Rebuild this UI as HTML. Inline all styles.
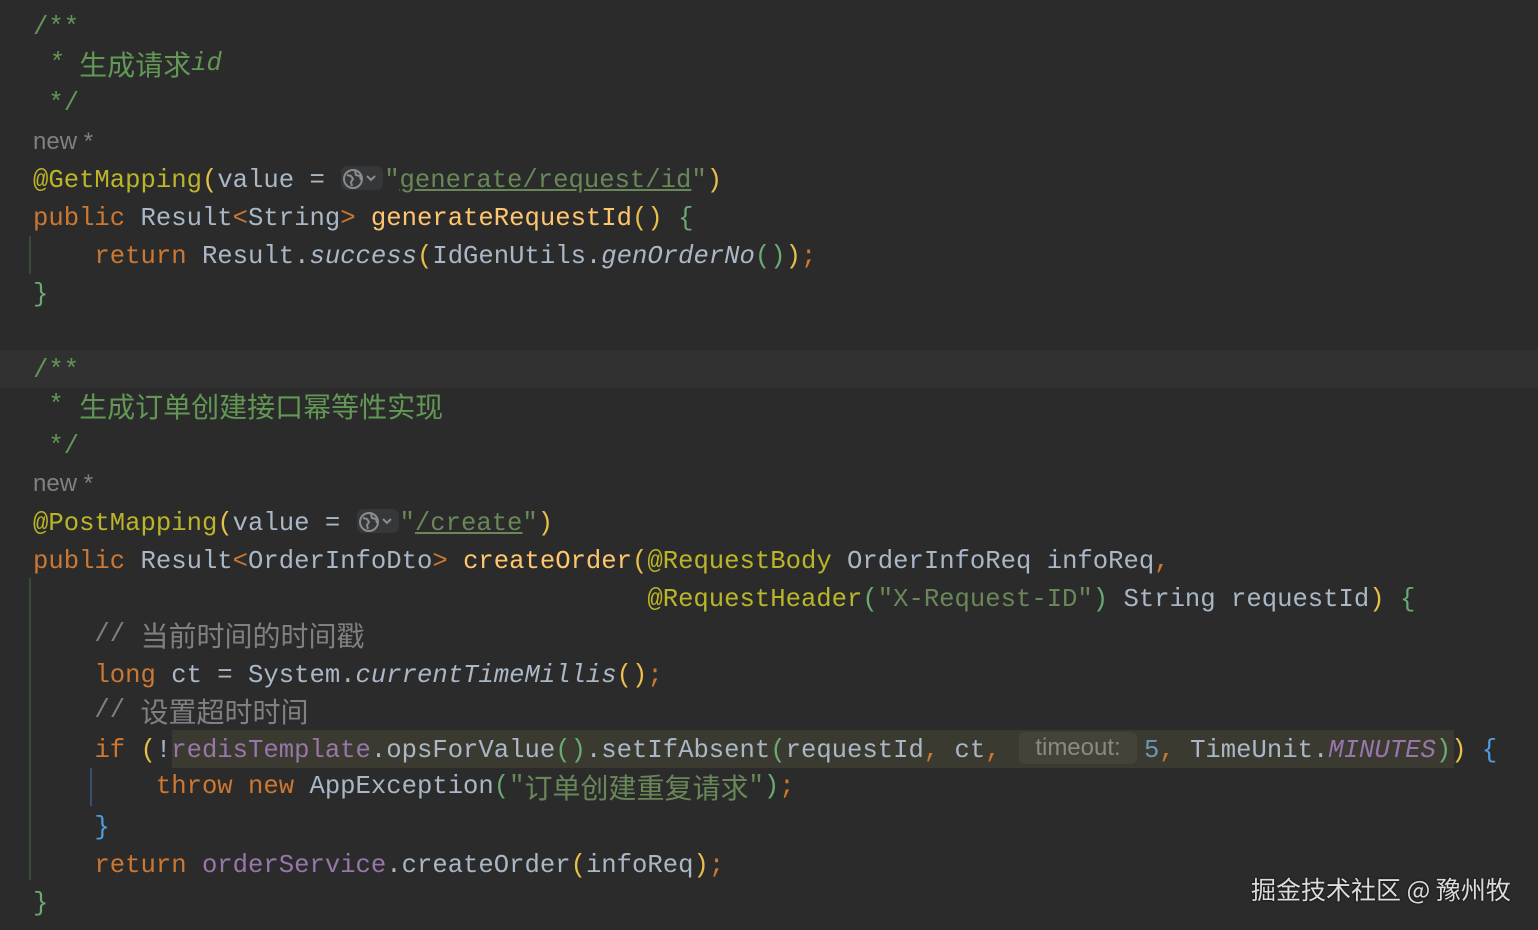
<!DOCTYPE html>
<html><head><meta charset="utf-8"><style>
html,body{margin:0;padding:0;background:#2b2b2b;width:1538px;height:930px;overflow:hidden;position:relative}
.l{position:absolute;left:33px;height:38px;line-height:38px;white-space:pre;font-family:"Liberation Mono","Noto Sans CJK SC",monospace;font-size:25.6px;color:#a9b7c6}
.cj{font-family:"Noto Sans CJK SC",sans-serif;font-size:28px;line-height:38px;display:inline-block;vertical-align:top}
.dc{color:#629755}.an{color:#bbb529}.kw{color:#cc7832}.fn{color:#ffc66d}.st{color:#6a8759}.cm{color:#808080}.fd{color:#9876aa}.nu{color:#6897bb}
.y{color:#e8bf4a}.g{color:#6aab73}.b{color:#4d9de0}
.i{font-style:italic}
.u{text-decoration:underline;text-decoration-color:#6a8759;color:#6a8759}
.new{position:absolute;left:33px;font-family:"Liberation Sans",sans-serif;font-size:24px;color:#808080;height:38px;line-height:38px}
.ic{display:inline-block;width:42px;height:24px;vertical-align:middle;margin:0 1px 4px 1px;background:#353738;border-radius:6px;position:relative}
.hint{display:inline-block;width:118px;box-sizing:border-box;text-align:center;font-family:"Liberation Sans",sans-serif;font-size:24px;color:#8a8a80;background:#43433a;border-radius:6px;height:32px;line-height:32px;vertical-align:middle;margin:0 7px 4px 3px}
</style></head><body>
<div style="position:absolute;left:0;top:350px;width:1538px;height:38px;background:#313131"></div>
<div style="position:absolute;left:172px;top:730px;width:1282px;height:38px;background:#3b3a30"></div>
<div style="position:absolute;left:29px;top:236px;width:2px;height:38px;background:#3a4a3a"></div>
<div style="position:absolute;left:29px;top:578px;width:2px;height:302px;background:#3a4a3a"></div>
<div style="position:absolute;left:90px;top:768px;width:2px;height:38px;background:#3a5070"></div>

<div class="l dc" style="top:9px">/**</div>
<div class="l dc i" style="top:45px"> * <span class="cj" style="font-style:normal">生成请求</span>id</div>
<div class="l dc" style="top:85px"> */</div>
<div class="new" style="top:123px">new *</div>
<div class="l" style="top:162px"><span class="an">@GetMapping</span><span class="y">(</span>value = <span class="ic"><svg width="42" height="24" viewBox="0 0 42 24"><circle cx="12" cy="12" r="9" fill="none" stroke="#8a8d90" stroke-width="2"/><path d="M6 8l4 1 2 3-2 3 1 4M14 4l1 4 4 1 1 4" fill="none" stroke="#8a8d90" stroke-width="2"/><path d="M26 9l4 4 4-4" fill="none" stroke="#8a8d90" stroke-width="2"/></svg></span><span class="st">"<span class="u">generate/request/id</span>"</span><span class="y">)</span></div>
<div class="l" style="top:200px"><span class="kw">public </span>Result<span class="kw">&lt;</span>String<span class="kw">&gt;</span> <span class="fn">generateRequestId</span><span class="y">()</span> <span class="g">{</span></div>
<div class="l" style="top:238px">    <span class="kw">return </span>Result.<span class="i">success</span><span class="y">(</span>IdGenUtils.<span class="i">genOrderNo</span><span class="g">()</span><span class="y">)</span><span class="kw">;</span></div>
<div class="l g" style="top:276px">}</div>

<div class="l dc" style="top:352px">/**</div>
<div class="l dc" style="top:387px"> * <span class="cj">生成订单创建接口幂等性实现</span></div>
<div class="l dc" style="top:428px"> */</div>
<div class="new" style="top:465px">new *</div>
<div class="l" style="top:505px"><span class="an">@PostMapping</span><span class="y">(</span>value = <span class="ic"><svg width="42" height="24" viewBox="0 0 42 24"><circle cx="12" cy="12" r="9" fill="none" stroke="#8a8d90" stroke-width="2"/><path d="M6 8l4 1 2 3-2 3 1 4M14 4l1 4 4 1 1 4" fill="none" stroke="#8a8d90" stroke-width="2"/><path d="M26 9l4 4 4-4" fill="none" stroke="#8a8d90" stroke-width="2"/></svg></span><span class="st">"<span class="u">/create</span>"</span><span class="y">)</span></div>
<div class="l" style="top:543px"><span class="kw">public </span>Result<span class="kw">&lt;</span>OrderInfoDto<span class="kw">&gt;</span> <span class="fn">createOrder</span><span class="y">(</span><span class="an">@RequestBody</span> OrderInfoReq infoReq<span class="kw">,</span></div>
<div class="l" style="top:581px">                                        <span class="an">@RequestHeader</span><span class="g">(</span><span class="st">"X-Request-ID"</span><span class="g">)</span> String requestId<span class="y">)</span> <span class="g">{</span></div>
<div class="l cm" style="top:616px">    // <span class="cj">当前时间的时间戳</span></div>
<div class="l" style="top:657px">    <span class="kw">long </span>ct = System.<span class="i">currentTimeMillis</span><span class="y">()</span><span class="kw">;</span></div>
<div class="l cm" style="top:692px">    // <span class="cj">设置超时时间</span></div>
<div class="l" style="top:732px">    <span class="kw">if </span><span class="y">(</span>!<span class="fd">redisTemplate</span>.opsForValue<span class="g">()</span>.setIfAbsent<span class="g">(</span>requestId<span class="kw">,</span> ct<span class="kw">,</span> <span class="hint">timeout:</span><span class="nu">5</span><span class="kw">,</span> TimeUnit.<span class="fd i">MINUTES</span><span class="g">)</span><span class="y">)</span> <span class="b">{</span></div>
<div class="l" style="top:768px">        <span class="kw">throw new </span>AppException<span class="g">(</span><span class="st">"<span class="cj">订单创建重复请求</span>"</span><span class="g">)</span><span class="kw">;</span></div>
<div class="l b" style="top:809px">    }</div>
<div class="l" style="top:847px">    <span class="kw">return </span><span class="fd">orderService</span>.createOrder<span class="y">(</span>infoReq<span class="y">)</span><span class="kw">;</span></div>
<div class="l g" style="top:885px">}</div>

<div style="position:absolute;left:1251px;top:871px;font-family:'Noto Sans CJK SC',sans-serif;font-size:25px;line-height:36px;color:#dcdcdc;text-shadow:0 0 2px #000">掘金技术社区 @ 豫州牧</div>
</body></html>
